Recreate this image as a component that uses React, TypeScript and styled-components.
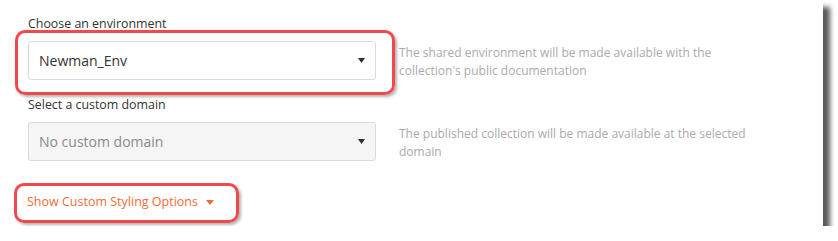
import React from 'react'
import styled, { createGlobalStyle } from 'styled-components'

const GlobalStyle = createGlobalStyle`
	body {
		margin: 0;
		background: #ffffff;
		font-family: 'Open Sans', 'Liberation Sans', sans-serif;
	}
`

interface FieldProps {
	label: string
	value: string
	description: string[]
	disabled?: boolean
	highlighted?: boolean
}

const Caret: React.FC<{ color: string; width?: number }> = ({ color, width = 8 }) => (
	<svg width={width} height="5" viewBox="0 0 8 5" preserveAspectRatio="none">
		<path d="M0 0 L8 0 L4 5 Z" fill={color} />
	</svg>
)

const Field: React.FC<FieldProps> = ({ label, value, description, disabled, highlighted }) => (
	<Row>
		<Label>{label}</Label>
		<SelectWrap>
			<Select $disabled={disabled}>
				<span>{value}</span>
				<Caret color="#2f2f2f" width={7} />
			</Select>
			{highlighted && <Highlight $inset="-11px -19px -15px -13px" />}
		</SelectWrap>
		<Description>
			{description.map((line) => (
				<div key={line}>{line}</div>
			))}
		</Description>
	</Row>
)

const App: React.FC = () => {
	return (
		<>
			<GlobalStyle />
			<Panel>
				<Field
					label="Choose an environment"
					value="Newman_Env"
					description={['The shared environment will be made available with the', "collection's public documentation"]}
					highlighted
				/>
				<Field
					label="Select a custom domain"
					value="No custom domain"
					description={['The published collection will be made available at the selected', 'domain']}
					disabled
				/>
				<LinkWrap>
					<StyleLink>
						Show Custom Styling Options
						<Caret color="#f26b3a" />
					</StyleLink>
					<Highlight $inset="-11px -25px -13px -13px" />
				</LinkWrap>
			</Panel>
		</>
	)
}

const Panel = styled.div`
	width: 823px;
	height: 226px;
	box-sizing: border-box;
	padding: 16px 0 0 28px;
	background: #ffffff;
	box-shadow: 7px 7px 5px rgba(0, 0, 0, 0.65);
	display: flex;
	flex-direction: column;
	gap: 17px;
`

const Row = styled.div`
	display: grid;
	grid-template-columns: 348px 380px;
	grid-template-rows: auto auto;
	column-gap: 23px;
	row-gap: 9px;
`

const Label = styled.div`
	grid-column: 1;
	grid-row: 1;
	font-size: 12.4px;
	line-height: 16px;
	color: #333333;
`

const SelectWrap = styled.div`
	position: relative;
	grid-column: 1;
	grid-row: 2;
`

const Select = styled.div<{ $disabled?: boolean }>`
	display: flex;
	align-items: center;
	justify-content: space-between;
	height: 39px;
	box-sizing: border-box;
	padding: 0 10px 0 10px;
	border: 1px solid #dadada;
	border-radius: 3px;
	background: ${({ $disabled }) => ($disabled ? '#f5f5f5' : '#ffffff')};
	color: ${({ $disabled }) => ($disabled ? '#8a8a8a' : '#333333')};
	font-size: 14px;
`

const Description = styled.div`
	grid-column: 2;
	grid-row: 2;
	padding-top: 3px;
	font-size: 12px;
	line-height: 18px;
	color: #aaaaaa;
`

const LinkWrap = styled.div`
	position: relative;
	align-self: flex-start;
	margin-top: 16px;
	margin-left: -1px;
`

const StyleLink = styled.div`
	display: flex;
	align-items: center;
	gap: 8px;
	font-size: 12.5px;
	line-height: 16px;
	color: #f26b3a;
	cursor: pointer;
`

const Highlight = styled.div<{ $inset: string }>`
	position: absolute;
	inset: ${({ $inset }) => $inset};
	border: 3px solid #f2484c;
	border-radius: 10px;
	box-shadow: 2px 2px 3px rgba(0, 0, 0, 0.3);
	pointer-events: none;
`

export default App
